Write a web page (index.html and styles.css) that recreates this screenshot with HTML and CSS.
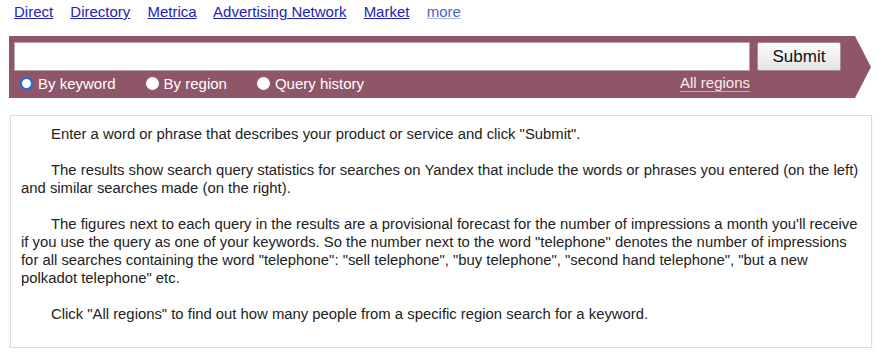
FILE: index.html
```html
<!DOCTYPE html>
<html lang="en">
<head>
    <meta charset="UTF-8">
    <title>Keyword statistics</title>
    <link rel="stylesheet" href="styles.css">
</head>
<body>
    <div class="nav">
        <a href="#">Direct</a>
        <a href="#">Directory</a>
        <a href="#">Metrica</a>
        <a href="#">Advertising Network</a>
        <a href="#">Market</a>
        <a href="#" class="more">more</a>
    </div>

    <form class="search">
        <div class="search-row">
            <input type="text" class="query">
            <button type="button" class="btn-submit">Submit</button>
        </div>
        <div class="options">
            <label class="opt"><span class="radio checked"></span>By keyword</label>
            <label class="opt"><span class="radio"></span>By region</label>
            <label class="opt"><span class="radio"></span>Query history</label>
            <a href="#" class="regions">All regions</a>
        </div>
    </form>

    <div class="info">
        <p>Enter a word or phrase that describes your product or service and click "Submit".</p>
        <p>The results show search query statistics for searches on Yandex that include the words or phrases you entered (on the left) and similar searches made (on the right).</p>
        <p>The figures next to each query in the results are a provisional forecast for the number of impressions a month you'll receive if you use the query as one of your keywords. So the number next to the word "telephone" denotes the number of impressions for all searches containing the word "telephone": "sell telephone", "buy telephone", "second hand telephone", "but a new polkadot telephone" etc.</p>
        <p>Click "All regions" to find out how many people from a specific region search for a keyword.</p>
    </div>
</body>
</html>
```

FILE: styles.css
```css
body {
    margin: 0;
    font-family: "Liberation Sans", Arial, sans-serif;
    font-size: 15px;
    color: #222;
    background: #fff;
}
.nav {
    height: 36px;
    padding: 3px 0 0 14px;
    box-sizing: border-box;
    line-height: 18px;
}
.nav a {
    color: #2323b5;
    margin-right: 13px;
}
.nav .more {
    color: #4d5fd0;
    text-decoration-color: #a9b4ea;
}
.search {
    margin: 0 0 0 9px;
    width: 862px;
    height: 62px;
    box-sizing: border-box;
    padding: 6px 0 0 5px;
    background: #8f5569;
    clip-path: polygon(0 0, calc(100% - 16px) 0, 100% 50%, calc(100% - 16px) 100%, 0 100%);
}
.search-row {
    display: flex;
    gap: 7px;
}
.query {
    width: 736px;
    height: 29px;
    box-sizing: border-box;
    margin: 0;
    border: 1px solid #b9a4ac;
    background: #fff;
}
.btn-submit {
    width: 84px;
    height: 29px;
    margin: 0;
    border: 1px solid #a58d96;
    border-radius: 2px;
    background: linear-gradient(#fdfdfd, #e4e4e4);
    font-family: "Liberation Sans", Arial, sans-serif;
    font-size: 17px;
    color: #111;
    padding: 0;
}
.options {
    display: flex;
    align-items: center;
    height: 24px;
    padding-left: 6px;
    box-sizing: border-box;
    color: #fff;
    width: 736px;
}
.opt {
    display: flex;
    align-items: center;
    margin-right: 30px;
}
.radio {
    width: 13px;
    height: 13px;
    border-radius: 50%;
    background: #fff;
    margin-right: 5px;
    box-sizing: border-box;
}
.radio.checked {
    border: 2px solid #1a6ce8;
}
.regions {
    margin-left: auto;
    color: #f4eef0;
    text-decoration: none;
    border-bottom: 1px solid #c7a9b4;
    line-height: 16px;
}
.info {
    margin: 17px 0 0 10px;
    width: 862px;
    box-sizing: border-box;
    border: 1px solid #dcdcdc;
    box-shadow: 0 2px 3px rgba(0,0,0,0.08);
    padding: 9px 4px 6px 10px;
    font-size: 14.85px;
    line-height: 18px;
}
.info p {
    margin: 0 0 18px;
    text-indent: 30px;
}
```
